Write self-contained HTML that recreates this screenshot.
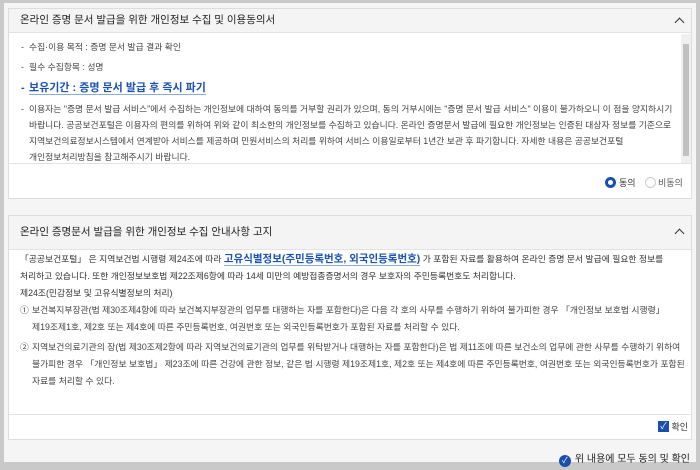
<!DOCTYPE html><html><head><meta charset="utf-8"><style>
*{margin:0;padding:0;box-sizing:border-box}
body{width:700px;height:470px;background:#c9c9c9;font-family:"Liberation Sans","Noto Sans CJK KR",sans-serif;color:#333;position:relative;overflow:hidden;word-break:keep-all}
.wrap{position:absolute;left:4px;top:3px;width:692px;height:459px;background:#f5f5f5}
.panel{position:absolute;left:4px;width:684px;background:#fff;border:1px solid #ddd;overflow:hidden}
.hd{height:34px;background:#f4f4f4;border-bottom:1px solid #e2e2e2;font-size:10.5px;color:#222;padding-left:11px;line-height:33px;position:relative}
.hd:after{content:"";position:absolute;right:8px;top:14px;width:6px;height:6px;border-left:1.5px solid #333;border-top:1.5px solid #333;transform:rotate(45deg)}
.hd.s:after{top:10px}
.ft{position:absolute;left:0;right:0;bottom:0;height:27px;border-top:1px solid #e2e2e2;font-size:9px;color:#333;background:#fff}
ul{list-style:none}
.b li{position:relative;padding-left:20px;font-size:8.8px;color:#444}
.b li:before{content:"-";position:absolute;left:12px}
</style></head><body>
<div class="wrap">
<div class="panel" style="top:5px;height:191px">
 <div class="hd s" style="height:24px;line-height:23px">온라인 증명 문서 발급을 위한 개인정보 수집 및 이용동의서</div>
 <div style="position:absolute;right:0;top:25px;width:10px;height:130px;background:#f0f0f0"><div style="position:absolute;left:2px;top:10px;width:6px;height:112px;background:#c1c1c1"></div></div>
 <ul class="b" style="position:absolute;top:31px;left:0;width:668px">
  <li style="line-height:14px">수집·이용 목적 : 증명 문서 발급 결과 확인</li>
  <li style="line-height:14px;margin-top:6px">필수 수집항목 : 성명</li>
  <li style="line-height:22px;margin-top:3px;font-size:11px;color:#1a53b5;font-weight:bold"><span style="border-bottom:1px solid #8aa9dd">보유기간 : 증명 문서 발급 후 즉시 파기</span></li>
  <li style="line-height:16px;margin-top:2px">이용자는 "증명 문서 발급 서비스"에서 수집하는 개인정보에 대하여 동의를 거부할 권리가 있으며, 동의 거부시에는 "증명 문서 발급 서비스" 이용이 불가하오니 이 점을 양지하시기 바랍니다. 공공보건포털은 이용자의 편의를 위하여 위와 같이 최소한의 개인정보를 수집하고 있습니다. 온라인 증명문서 발급에 필요한 개인정보는 인증된 대상자 정보를 기준으로 지역보건의료정보시스템에서 연계받아 서비스를 제공하며 민원서비스의 처리를 위하여 서비스 이용일로부터 1년간 보관 후 파기합니다. 자세한 내용은 공공보건포털<br>개인정보처리방침을 참고해주시기 바랍니다.</li>
 </ul>
 <div class="ft" style="height:35px"><span style="position:absolute;left:596px;top:13px;width:11px;height:11px;border-radius:50%;border:3px solid #1a4fb0"></span><span style="position:absolute;left:610px;top:12px">동의</span><span style="position:absolute;left:636px;top:13px;width:11px;height:11px;border-radius:50%;border:1px solid #ccc"></span><span style="position:absolute;left:649px;top:12px;color:#555">비동의</span></div>
</div>
<div class="panel" style="top:212px;height:225px">
 <div class="hd">온라인 증명문서 발급을 위한 개인정보 수집 안내사항 고지</div>
 <div style="position:absolute;top:35px;left:11px;right:6px;font-size:8.8px;line-height:17px;color:#333">
  <div style="padding-right:8px">「공공보건포털」 은 지역보건법 시행령 제24조에 따라 <span style="font-size:10.5px;color:#1a53b5;font-weight:bold;border-bottom:1px solid #8aa9dd">고유식별정보(주민등록번호, 외국인등록번호)</span> 가 포함된 자료를 활용하여 온라인 증명 문서 발급에 필요한 정보를 처리하고 있습니다. 또한 개인정보보호법 제22조제6항에 따라 14세 미만의 예방접종증명서의 경우 보호자의 주민등록번호도 처리합니다.<br>제24조(민감정보 및 고유식별정보의 처리)</div>
  <div style="padding-left:12px;padding-right:8px;position:relative;color:#444"><span style="position:absolute;left:0">①</span>보건복지부장관(법 제30조제4항에 따라 보건복지부장관의 업무를 대행하는 자를 포함한다)은 다음 각 호의 사무를 수행하기 위하여 불가피한 경우 「개인정보 보호법 시행령」 제19조제1호, 제2호 또는 제4호에 따른 주민등록번호, 여권번호 또는 외국인등록번호가 포함된 자료를 처리할 수 있다.</div>
  <div style="padding-left:12px;position:relative;color:#444;margin-top:3px"><span style="position:absolute;left:0">②</span>지역보건의료기관의 장(법 제30조제2항에 따라 지역보건의료기관의 업무를 위탁받거나 대행하는 자를 포함한다)은 법 제11조에 따른 보건소의 업무에 관한 사무를 수행하기 위하여 불가피한 경우 「개인정보 보호법」 제23조에 따른 건강에 관한 정보, 같은 법 시행령 제19조제1호, 제2호 또는 제4호에 따른 주민등록번호, 여권번호 또는 외국인등록번호가 포함된 자료를 처리할 수 있다.</div>
 </div>
 <div class="ft" style="height:25px"><span style="position:absolute;right:22px;top:6px;width:11px;height:11px;background:#1a4fb0;color:#fff;font-size:9px;line-height:11px;text-align:center">✓</span><span style="position:absolute;right:3px;top:5px">확인</span></div>
</div>
<div style="position:absolute;right:6px;top:450px;font-size:10px;line-height:13px;color:#222"><span style="display:inline-block;width:12px;height:12px;border-radius:50%;background:#1a4fb0;color:#fff;font-size:8px;line-height:12px;text-align:center;margin-right:4px;vertical-align:-1px">✓</span>위 내용에 모두 동의 및 확인</div>
</div>
</body></html>
